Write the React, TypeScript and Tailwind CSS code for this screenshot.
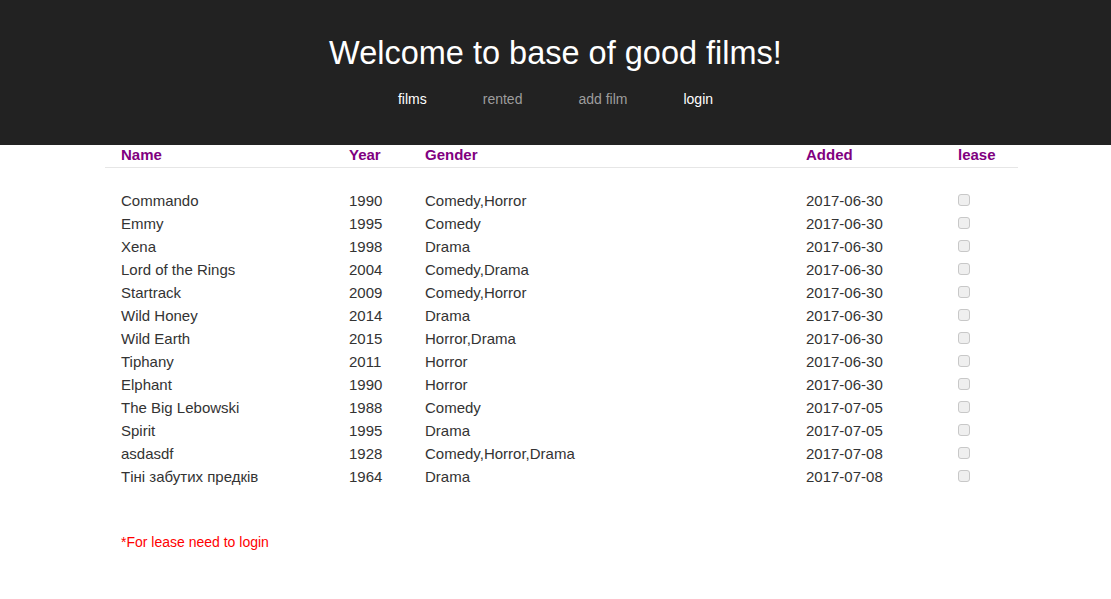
import React from 'react';

interface Film {
  name: string;
  year: number;
  gender: string;
  added: string;
}

const films: Film[] = [
  { name: 'Commando', year: 1990, gender: 'Comedy,Horror', added: '2017-06-30' },
  { name: 'Emmy', year: 1995, gender: 'Comedy', added: '2017-06-30' },
  { name: 'Xena', year: 1998, gender: 'Drama', added: '2017-06-30' },
  { name: 'Lord of the Rings', year: 2004, gender: 'Comedy,Drama', added: '2017-06-30' },
  { name: 'Startrack', year: 2009, gender: 'Comedy,Horror', added: '2017-06-30' },
  { name: 'Wild Honey', year: 2014, gender: 'Drama', added: '2017-06-30' },
  { name: 'Wild Earth', year: 2015, gender: 'Horror,Drama', added: '2017-06-30' },
  { name: 'Tiphany', year: 2011, gender: 'Horror', added: '2017-06-30' },
  { name: 'Elphant', year: 1990, gender: 'Horror', added: '2017-06-30' },
  { name: 'The Big Lebowski', year: 1988, gender: 'Comedy', added: '2017-07-05' },
  { name: 'Spirit', year: 1995, gender: 'Drama', added: '2017-07-05' },
  { name: 'asdasdf', year: 1928, gender: 'Comedy,Horror,Drama', added: '2017-07-08' },
  { name: 'Тіні забутих предків', year: 1964, gender: 'Drama', added: '2017-07-08' },
];

const navItems = [
  { label: 'films', active: true },
  { label: 'rented', active: false },
  { label: 'add film', active: false },
  { label: 'login', active: true },
];

const App: React.FC = () => {
  return (
    <div className="min-h-[599px] bg-white font-['Liberation_Sans',Arial,sans-serif] text-[#333]">
      {/* Header */}
      <header className="h-[145px] bg-[#222222] flex flex-col items-center">
        <h1 className="mt-[33px] text-[32.5px] leading-[40px] text-white">Welcome to base of good films!</h1>
        <nav className="mt-[16px] flex gap-[56px] text-[14px] leading-5">
          {navItems.map((item) => (
            <a key={item.label} className={item.active ? 'text-white' : 'text-[#9d9d9d]'}>
              {item.label}
            </a>
          ))}
        </nav>
      </header>

      {/* Films table */}
      <div className="ml-[105px] w-[913px]">
        <table className="w-full border-collapse text-[15px]">
          <thead>
            <tr className="border-b border-[#e6e6e6] text-[#800080] font-bold">
              <th className="w-[228px] pl-4 pt-px text-left h-[22px] leading-[18px] align-top">Name</th>
              <th className="w-[76px] pl-4 pt-px text-left leading-[18px] align-top">Year</th>
              <th className="w-[381px] pl-4 pt-px text-left leading-[18px] align-top">Gender</th>
              <th className="w-[152px] pl-4 pt-px text-left leading-[18px] align-top">Added</th>
              <th className="pl-4 pt-px text-left leading-[18px] align-top">lease</th>
            </tr>
          </thead>
          <tbody>
            <tr className="h-[23px]">
              <td colSpan={5}></td>
            </tr>
            {films.map((f) => (
              <tr key={f.name} className="h-[23px]">
                <td className="pl-4">{f.name}</td>
                <td className="pl-4">{f.year}</td>
                <td className="pl-4">{f.gender}</td>
                <td className="pl-4">{f.added}</td>
                <td className="pl-4">
                  <div className="w-[12px] h-[12px] -mt-[3px] rounded-[3px] border border-[#c8c8c8] bg-[#efefef]" />
                </td>
              </tr>
            ))}
          </tbody>
        </table>
        <p className="mt-[43px] pl-4 text-[14px] text-[#ff0000]">*For lease need to login</p>
      </div>
    </div>
  );
};

export default App;
